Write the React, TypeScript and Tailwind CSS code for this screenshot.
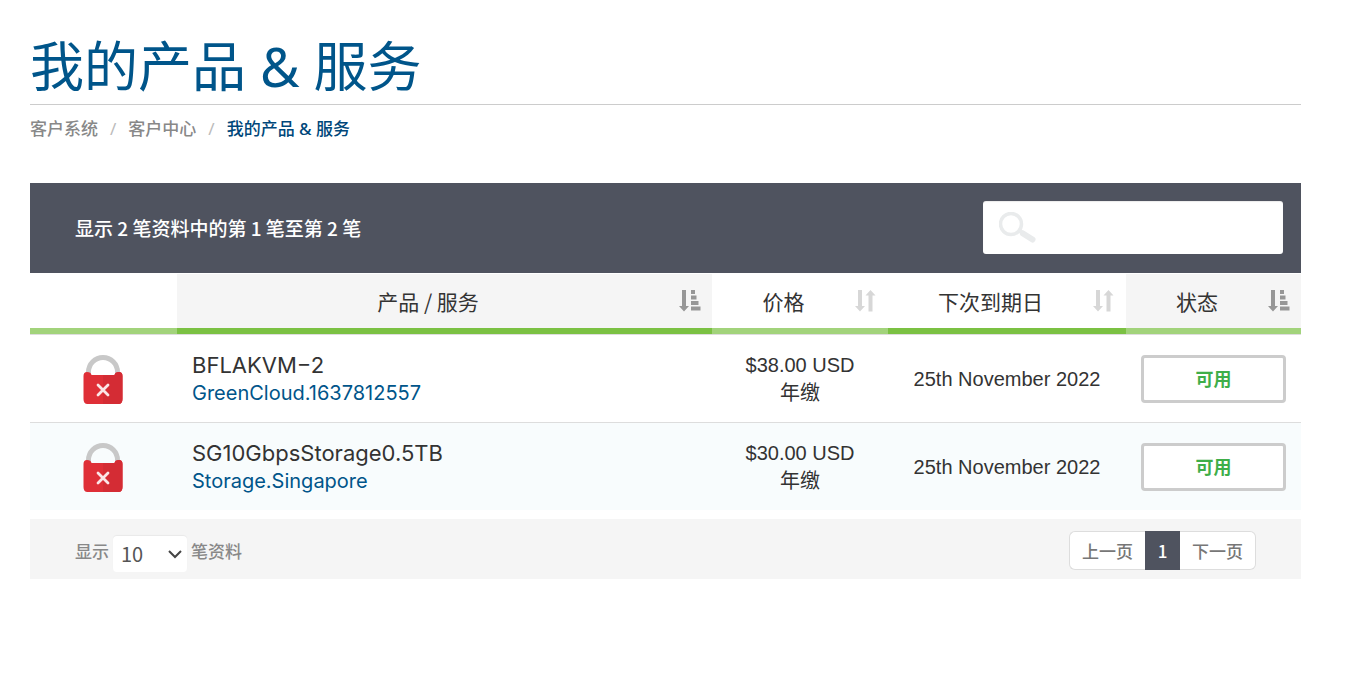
import { useState } from "react";

type Service = {
  name: string;
  domain: string;
  price: string;
  cycle: string;
  dueDate: string;
  status: string;
};

const services: Service[] = [
  {
    name: "BFLAKVM−2",
    domain: "GreenCloud.1637812557",
    price: "$38.00 USD",
    cycle: "年缴",
    dueDate: "25th November 2022",
    status: "可用",
  },
  {
    name: "SG10GbpsStorage0.5TB",
    domain: "Storage.Singapore",
    price: "$30.00 USD",
    cycle: "年缴",
    dueDate: "25th November 2022",
    status: "可用",
  },
];

function LockIcon() {
  return (
    <svg width="40" height="49" viewBox="0 0 40 49" className="block" aria-hidden="true">
      <path d="M5.500 21 V17 A14.500 14.500 0 0 1 34.500 17 V21" fill="none" stroke="#c8c8c8" strokeWidth="5" />
      <path
        d="M4 17 Q8 17 8.500 20 H31.500 Q32 17 36 17 Q39.500 17 39.500 21 V44 Q39.500 49 35.500 49 H4.500 Q0.500 49 0.500 44 V21 Q0.500 17 4 17 Z"
        fill="#df2f37"
      />
      <path d="M20 20 H31.500 Q32 17 36 17 Q39.500 17 39.500 21 V44 Q39.500 49 35.500 49 H20 Z" fill="#d42c34" />
      <path d="M15 30 L25 40 M25 30 L15 40" stroke="#fbe6e7" strokeWidth="2.800" strokeLinecap="round" />
    </svg>
  );
}

function SortIcon({ active }: { active?: boolean }) {
  if (active) {
    return (
      <svg width="22" height="22" viewBox="0 0 22 22" fill="#979797" aria-hidden="true">
        <path d="M3 0 H7 V16 H10 L5 21.500 L0 16 H3 Z" />
        <path d="M12 0 H16 V4 H12 Z M12 5.500 H17.500 V9.500 H12 Z M12 11 H19.500 V15 H12 Z M12 16.500 H21.500 V20.500 H12 Z" />
      </svg>
    );
  }
  return (
    <svg width="22" height="22" viewBox="0 0 22 22" fill="#d7d7d7" aria-hidden="true">
      <path d="M3 0 H7 V16 H10 L5 21.500 L0 16 H3 Z" />
      <path d="M13.500 21.500 H17.500 V5.500 H20.500 L15.500 0 L10.500 5.500 H13.500 Z" />
    </svg>
  );
}

function HeaderCell({ label, sorted, dark }: { label: string; sorted?: boolean; dark?: boolean }) {
  return (
    <th
      scope="col"
      className={`h-[61px] border-t border-b-[6px] border-t-white p-0 font-normal ${
        sorted ? "bg-[#f5f5f5]" : "bg-white"
      } ${dark ? "border-b-[#7bc143]" : "border-b-[#a2d37b]"}`}
    >
      <button
        type="button"
        className="flex w-full items-center pr-[11px] font-['Noto_Sans_CJK_SC',sans-serif] text-[21px] leading-7 text-[#333]"
      >
        <span className="grow text-center">{label}</span>
        <SortIcon active={sorted} />
      </button>
    </th>
  );
}

export default function App() {
  const [query, setQuery] = useState("");

  return (
    <div className="bg-white pt-[31px] pr-[67px] pl-[30px] font-['Inter','Noto_Sans_CJK_SC',sans-serif] text-[#333]">
      {/* Title and breadcrumb */}
      <header>
        <h1 className="border-b border-[#ccc] pb-0.5 font-['Noto_Sans','Noto_Sans_CJK_SC',sans-serif] text-[54px] leading-[71px] text-[#00558a]">
          我的产品 &amp; 服务
        </h1>
        <nav className="mt-3 font-['Noto_Sans','Noto_Sans_CJK_SC',sans-serif] text-[17px] leading-6 font-medium text-[#888]">
          <ol className="flex">
            <li>
              <a href="#">客户系统</a>
              <span className="px-3 font-normal text-[#bbb]">/</span>
            </li>
            <li>
              <a href="#">客户中心</a>
              <span className="px-3 font-normal text-[#bbb]">/</span>
            </li>
            <li className="text-[#00477a]">我的产品 &amp; 服务</li>
          </ol>
        </nav>
      </header>

      <main className="mt-[42px]">
        {/* Info bar with search */}
        <div className="flex items-start justify-between bg-[#4f535f] pt-[18px] pr-[18px] pb-[19px] pl-[45px]">
          <p className="self-center font-['Noto_Sans_CJK_SC',sans-serif] text-[19px] leading-6 font-medium text-white">
            显示 2 笔资料中的第 1 笔至第 2 笔
          </p>
          <label className="flex h-[53px] w-[300px] items-center rounded-[3px] bg-white pl-4 shadow-[inset_0_1px_1px_rgba(0,0,0,0.08)]">
            <svg
              width="38"
              height="32"
              viewBox="0 0 38 32"
              className="shrink-0"
              fill="none"
              stroke="#e9ebec"
              aria-hidden="true"
            >
              <circle cx="12" cy="12" r="10.500" strokeWidth="3.500" />
              <path d="M20 18.500 L24 21" strokeWidth="4" />
              <path d="M24 21.500 L33.500 27.500" strokeWidth="6" strokeLinecap="round" />
            </svg>
            <input
              type="search"
              aria-label="搜索"
              value={query}
              onChange={(e) => setQuery(e.target.value)}
              className="h-full min-w-0 grow px-3 text-xl outline-none"
            />
          </label>
        </div>

        <table className="w-full table-fixed border-separate border-spacing-0">
          <colgroup>
            <col className="w-[147px]" />
            <col />
            <col className="w-[176px]" />
            <col className="w-[238px]" />
            <col className="w-[175px]" />
          </colgroup>
          <thead>
            <tr>
              <td className="border-b-[6px] border-[#a2d37b]"></td>
              <HeaderCell label="产品 / 服务" sorted dark />
              <HeaderCell label="价格" />
              <HeaderCell label="下次到期日" dark />
              <HeaderCell label="状态" sorted />
            </tr>
          </thead>
          <tbody className="text-[20px] leading-7">
            {services.map((service) => (
              <tr key={service.name} className="h-[88px] even:bg-[#f8fcfd] [&>td]:border-t [&>td]:border-[#ddd]">
                <td className="pt-px pl-[53px]">
                  <LockIcon />
                </td>
                <td className="px-[15px] pt-px">
                  <div className="text-[22px]">{service.name}</div>
                  <a href="#" className="text-[#00558a]">
                    {service.domain}
                  </a>
                </td>
                <td className="pt-px text-center font-['Liberation_Sans','Noto_Sans_CJK_SC',sans-serif]">
                  <div>{service.price}</div>
                  <div>{service.cycle}</div>
                </td>
                <td className="pt-px text-center font-['Liberation_Sans',sans-serif]">{service.dueDate}</td>
                <td className="px-[15px]">
                  <button
                    type="button"
                    className="block h-12 w-full rounded-[4px] border-[3px] border-[#ccc] bg-white pt-0.5 text-[18px] leading-6 font-bold text-[#3fae49]"
                  >
                    {service.status}
                  </button>
                </td>
              </tr>
            ))}
          </tbody>
        </table>

        {/* Page length and pagination */}
        <footer className="mt-[9px] flex h-[60px] items-center justify-between bg-[#f5f5f5] px-[45px] font-['Noto_Sans_CJK_SC',sans-serif] text-[17px] leading-6 font-medium text-[#888]">
          <label className="mt-1 flex items-center gap-1">
            显示
            <span className="relative mt-1.5 block">
              <select
                defaultValue="10"
                className="block h-9 w-[74px] appearance-none rounded-[4px] bg-white pl-2 text-[20px] font-normal text-[#555] shadow-[0_-1px_1px_rgba(0,0,0,0.05)]"
              >
                <option>10</option>
                <option>25</option>
                <option>50</option>
              </select>
              <svg
                width="14"
                height="9"
                viewBox="0 0 14 9"
                className="pointer-events-none absolute top-[14px] right-[5px]"
                fill="none"
                stroke="#444"
                strokeWidth="2"
                aria-hidden="true"
              >
                <path d="M1 1 L7 7 L13 1" />
              </svg>
            </span>
            笔资料
          </label>
          <nav className="mt-[3px] flex h-[39px] text-[#777]">
            <button type="button" className="rounded-l-[6px] border border-r-0 border-[#ddd] bg-white px-3">
              上一页
            </button>
            <button type="button" className="w-[35px] bg-[#4f535f] text-white">
              1
            </button>
            <button type="button" className="rounded-r-[6px] border border-l-0 border-[#ddd] bg-white px-3">
              下一页
            </button>
          </nav>
        </footer>
      </main>
    </div>
  );
}
